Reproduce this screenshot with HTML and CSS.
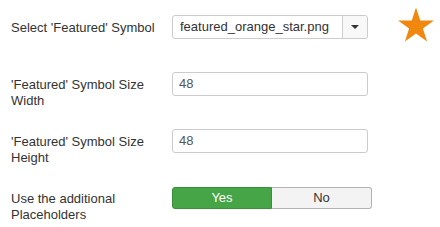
FILE: index.html
```html
<!DOCTYPE html>
<html>
<head>
<meta charset="utf-8">
<link rel="stylesheet" href="styles.css">
</head>
<body>
<div class="form">
  <div class="row">
    <div class="label">Select 'Featured' Symbol</div>
    <div class="controls">
      <div class="select">
        <span class="select-text">featured_orange_star.png</span>
        <span class="select-btn"><span class="caret"></span></span>
      </div>
      <svg class="star" width="36" height="35" viewBox="0 0 100 95.1" aria-hidden="true">
        <polygon fill="#f0870f" points="50,0 61.8,36.3 100,36.3 69.1,58.8 80.9,95.1 50,72.6 19.1,95.1 30.9,58.8 0,36.3 38.2,36.3"/>
      </svg>
    </div>
  </div>
  <div class="row">
    <div class="label">'Featured' Symbol Size Width</div>
    <div class="controls"><div class="input">48</div></div>
  </div>
  <div class="row">
    <div class="label">'Featured' Symbol Size Height</div>
    <div class="controls"><div class="input">48</div></div>
  </div>
  <div class="row last">
    <div class="label">Use the additional Placeholders</div>
    <div class="controls">
      <div class="toggle">
        <span class="opt yes">Yes</span>
        <span class="opt no">No</span>
      </div>
    </div>
  </div>
</div>
</body>
</html>
```
FILE: styles.css
```css
html, body {
  margin: 0;
  padding: 0;
  background: #ffffff;
}
body {
  font-family: "Liberation Sans", Arial, sans-serif;
  font-size: 13px;
  color: #333333;
}
.form {
  padding: 15px 0 0 11px;
}
.row {
  display: flex;
  align-items: flex-start;
  height: 57px;
}
.row.last {
  height: auto;
}
.label {
  width: 150px;
  margin-right: 11px;
  padding-top: 5px;
  line-height: 16px;
}
.controls {
  display: flex;
  align-items: flex-start;
}
.select {
  box-sizing: border-box;
  width: 196px;
  height: 24px;
  border: 1px solid #cccccc;
  border-radius: 3px;
  display: flex;
  align-items: stretch;
  background: #ffffff;
}
.select-text {
  flex: 1;
  padding-left: 7px;
  line-height: 22px;
  color: #333333;
}
.select-btn {
  width: 24px;
  border-left: 1px solid #cccccc;
  background: #f8f8f8;
  display: flex;
  align-items: center;
  justify-content: center;
  border-radius: 0 3px 3px 0;
}
.caret {
  width: 0;
  height: 0;
  border-left: 4px solid transparent;
  border-right: 4px solid transparent;
  border-top: 4px solid #333333;
}
.star {
  display: block;
  margin-left: 30px;
  margin-top: -8px;
}
.input {
  box-sizing: border-box;
  width: 196px;
  height: 24px;
  border: 1px solid #cccccc;
  border-radius: 3px;
  padding-left: 6px;
  line-height: 22px;
  color: #555555;
}
.toggle {
  margin-top: 1px;
  display: flex;
  width: 200px;
  height: 22px;
}
.opt {
  box-sizing: border-box;
  width: 100px;
  height: 22px;
  line-height: 20px;
  text-align: center;
}
.yes {
  background: #46a546;
  border: 1px solid #3b8f3b;
  border-radius: 3px 0 0 3px;
  color: #ffffff;
}
.no {
  background: #f3f3f3;
  border: 1px solid #b3b3b3;
  border-left: none;
  border-radius: 0 3px 3px 0;
  color: #333333;
}
```
